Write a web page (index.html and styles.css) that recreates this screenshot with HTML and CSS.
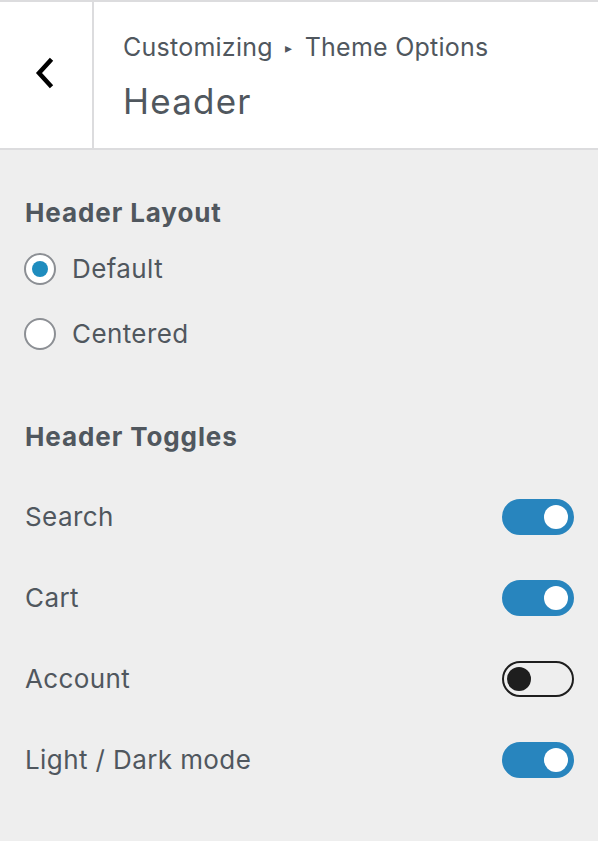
FILE: index.html
```html
<!DOCTYPE html>
<html lang="en">
<head>
<meta charset="utf-8">
<title>Customizing Header</title>
<link rel="stylesheet" href="styles.css">
</head>
<body>
<div class="panel">
  <div class="topbar">
    <div class="back">
      <svg class="chev" width="20" height="32" viewBox="0 0 20 32"><polyline points="16,4 5,16 16,28" fill="none" stroke="#000" stroke-width="4.5" stroke-linecap="square" stroke-linejoin="miter"/></svg>
    </div>
    <div class="titles">
      <div class="crumb">Customizing <span class="tri">&#9656;</span> Theme Options</div>
      <div class="title">Header</div>
    </div>
  </div>
  <div class="content">
    <div class="section-title">Header Layout</div>
    <div class="radio-list">
      <div class="radio-row"><span class="radio checked"></span><span class="label">Default</span></div>
      <div class="radio-row"><span class="radio"></span><span class="label">Centered</span></div>
    </div>
    <div class="section-title toggles-title">Header Toggles</div>
    <div class="toggle-list">
      <div class="toggle-row"><span class="label">Search</span><span class="toggle on"><span class="knob"></span></span></div>
      <div class="toggle-row"><span class="label">Cart</span><span class="toggle on"><span class="knob"></span></span></div>
      <div class="toggle-row"><span class="label">Account</span><span class="toggle off"><span class="knob"></span></span></div>
      <div class="toggle-row"><span class="label">Light / Dark mode</span><span class="toggle on"><span class="knob"></span></span></div>
    </div>
  </div>
</div>
</body>
</html>
```
FILE: styles.css
```css
html, body {
  margin: 0;
  padding: 0;
  background: #eeeeee;
}
body {
  font-family: "Inter", "Liberation Sans", sans-serif;
  color: #50575e;
}
.panel {
  width: 598px;
  min-height: 841px;
  background: #eeeeee;
}
.topbar {
  display: flex;
  height: 146px;
  background: #ffffff;
  border-top: 2px solid #dcdcde;
  border-bottom: 2px solid #dcdcde;
}
.back {
  width: 94px;
  border-right: 2px solid #dcdcde;
  display: flex;
  align-items: center;
  justify-content: center;
  box-sizing: border-box;
  padding-right: 5px;
  padding-bottom: 4px;
  flex: none;
}
.chev { display: block; }
.titles {
  display: flex;
  flex-direction: column;
  padding-left: 29px;
  padding-top: 28px;
}
.crumb {
  font-size: 25px;
  letter-spacing: 0.25px;
  line-height: 34px;
  color: #50575e;
}
.tri {
  font-size: 14px;
  vertical-align: 3px;
  margin: 0 5px;
}
.title {
  font-size: 35px;
  letter-spacing: 1.2px;
  line-height: 44px;
  margin-top: 14px;
  color: #50575e;
}
.content {
  padding: 43px 24px 0 25px;
}
.section-title {
  font-size: 26px;
  letter-spacing: 0.9px;
  font-weight: 700;
  line-height: 40px;
  color: #50575e;
}
.radio-list {
  margin-top: 3px;
}
.radio-row {
  height: 65px;
  display: flex;
  align-items: center;
}
.radio {
  width: 32px;
  height: 32px;
  box-sizing: border-box;
  border: 2px solid #8c8f94;
  border-radius: 50%;
  background: #fff;
  margin-left: -1px;
  margin-right: 16px;
  display: flex;
  align-items: center;
  justify-content: center;
  flex: none;
}
.radio.checked::after {
  content: "";
  width: 16px;
  height: 16px;
  border-radius: 50%;
  background: #1e8cbe;
}
.label {
  font-size: 26px;
  letter-spacing: 0.4px;
  line-height: 34px;
  color: #50575e;
}
.toggles-title {
  margin-top: 51px;
}
.toggle-list {
  margin-top: 19px;
}
.toggle-row {
  height: 81px;
  display: flex;
  align-items: center;
  justify-content: space-between;
}
.toggle {
  width: 72px;
  height: 36px;
  box-sizing: border-box;
  border-radius: 18px;
  border: 2px solid #1e1e1e;
  display: flex;
  align-items: center;
  padding: 0 3px;
  flex: none;
}
.toggle.on {
  background: #2885be;
  border-color: #2885be;
  justify-content: flex-end;
  padding: 0 4px;
}
.knob {
  width: 24px;
  height: 24px;
  border-radius: 50%;
  background: #1e1e1e;
}
.toggle.on .knob {
  background: #fff;
}
```
